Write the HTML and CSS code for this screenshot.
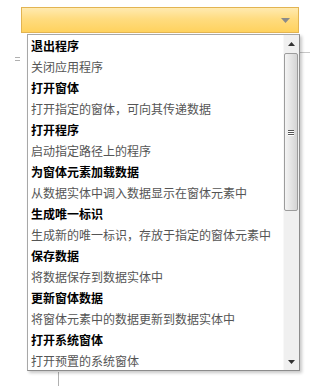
FILE: index.html
```html
<!DOCTYPE html>
<html lang="zh">
<head>
<meta charset="utf-8">
<link rel="stylesheet" href="styles.css">
</head>
<body>
<div class="page">
  <div class="bg-tick"></div>
  <div class="bg-hline"></div>
  <div class="bg-vline"></div>
  <div class="combo">
    <svg class="combo-arrow" width="9" height="5" viewBox="0 0 9 5"><path d="M0 0H9L4.5 5Z" fill="#8a8a8a"/></svg>
  </div>
  <div class="dropdown">
    <ul class="list">
      <li><b>退出程序</b><span>关闭应用程序</span></li>
      <li><b>打开窗体</b><span>打开指定的窗体，可向其传递数据</span></li>
      <li><b>打开程序</b><span>启动指定路径上的程序</span></li>
      <li><b>为窗体元素加载数据</b><span>从数据实体中调入数据显示在窗体元素中</span></li>
      <li><b>生成唯一标识</b><span>生成新的唯一标识，存放于指定的窗体元素中</span></li>
      <li><b>保存数据</b><span>将数据保存到数据实体中</span></li>
      <li><b>更新窗体数据</b><span>将窗体元素中的数据更新到数据实体中</span></li>
      <li><b>打开系统窗体</b><span>打开预置的系统窗体</span></li>
    </ul>
    <div class="scrollbar">
      <div class="sb-btn"><svg width="7" height="4" viewBox="0 0 7 4"><path d="M0 4H7L3.5 0Z" fill="#333"/></svg></div>
      <div class="sb-track">
        <div class="sb-thumb"><div class="grip"><i></i><i></i><i></i></div></div>
      </div>
      <div class="sb-btn"><svg width="7" height="4" viewBox="0 0 7 4"><path d="M0 0H7L3.5 4Z" fill="#333"/></svg></div>
    </div>
  </div>
</div>
</body>
</html>
```
FILE: styles.css
```css
html, body {
  margin: 0;
  padding: 0;
  background: #fff;
}
.page {
  position: relative;
  width: 324px;
  height: 388px;
  overflow: hidden;
  font-family: "Noto Sans CJK SC", "Noto Sans", sans-serif;
  padding-top: 7px;
  box-sizing: border-box;
}
.combo {
  margin-left: 21px;
  width: 278px;
  height: 26px;
  box-sizing: border-box;
  border: 1px solid #e2b452;
  background: linear-gradient(#ffeab0 0%, #ffdc80 45%, #ffd25e 100%);
  display: flex;
  align-items: center;
  justify-content: flex-end;
  padding-right: 8px;
}
.combo-arrow { display: block; }
.bg-tick {
  position: absolute;
  left: 15px;
  top: 57px;
  width: 5px;
  height: 1px;
  background: #b0b0b0;
  box-shadow: 0 3px 0 #b0b0b0;
}
.bg-hline {
  position: absolute;
  left: 300px;
  top: 52px;
  width: 10px;
  height: 1px;
  background: #c8c8c8;
}
.bg-vline {
  position: absolute;
  left: 58px;
  top: 372px;
  width: 1px;
  height: 14px;
  background: #b0b0b0;
}
.dropdown {
  position: absolute;
  left: 27px;
  top: 34px;
  width: 273px;
  height: 337px;
  box-sizing: border-box;
  border: 1px solid #a8a8a8;
  border-right-color: #8c8c8c;
  border-bottom-color: #8c8c8c;
  background: #fff;
  box-shadow: 2px 2px 3px rgba(0,0,0,0.22);
  display: flex;
  overflow: hidden;
}
.list {
  list-style: none;
  margin: 0;
  padding: 0 0 0 3px;
  flex: 1;
  overflow: hidden;
}
.list li {
  display: flex;
  flex-direction: column;
}
.list b {
  font-size: 12px;
  line-height: 21px;
  font-weight: 700;
  color: #000;
  white-space: nowrap;
}
.list span {
  font-size: 12px;
  line-height: 21px;
  color: #555;
  white-space: nowrap;
}
.scrollbar {
  width: 16px;
  flex: none;
  background: #f0f0f0;
  border-left: 1px solid #f8f8f8;
  display: flex;
  flex-direction: column;
  box-sizing: border-box;
}
.sb-btn {
  height: 17px;
  display: flex;
  align-items: center;
  justify-content: center;
  flex: none;
}
.sb-track {
  flex: 1;
  padding-top: 1px;
}
.sb-thumb {
  height: 158px;
  box-sizing: border-box;
  margin: 0 1px 0 0;
  border: 1px solid #9c9c9c;
  border-radius: 2px;
  background: linear-gradient(90deg, #f4f4f4, #e4e4e4 50%, #d4d4d4);
  display: flex;
  align-items: center;
  justify-content: center;
}
.grip {
  display: flex;
  flex-direction: column;
  gap: 1px;
}
.grip i {
  display: block;
  width: 6px;
  height: 1px;
  background: #555;
  box-shadow: 0 1px 0 #fff;
}
```
